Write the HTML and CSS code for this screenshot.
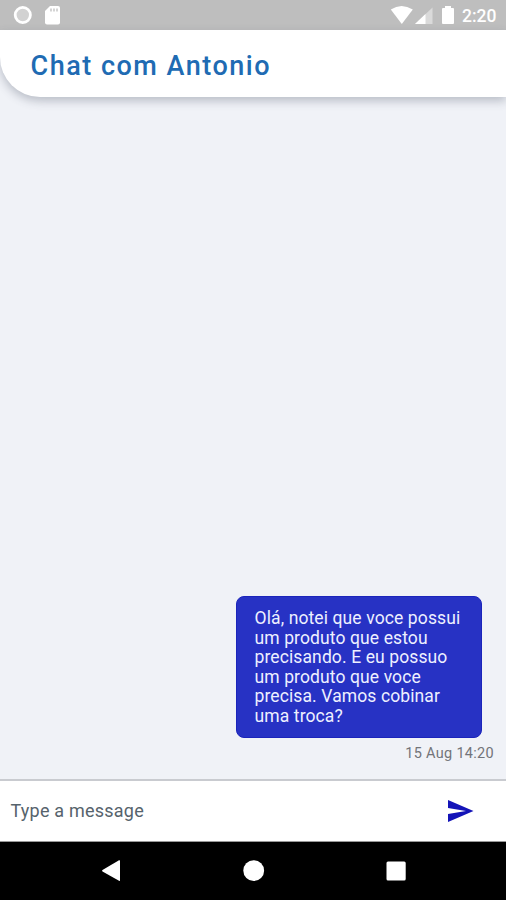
FILE: index.html
```html
<!DOCTYPE html>
<html lang="pt">
<head>
<meta charset="utf-8">
<title>Chat com Antonio</title>
<link rel="stylesheet" href="styles.css">
</head>
<body>
<div class="phone">
  <div class="status">
    <svg class="status-left" width="62" height="30" viewBox="0 0 62 30">
      <circle cx="22.800" cy="15" r="7.600" fill="#d2d2d2" stroke="#fff" stroke-width="2.800"/>
      <path fill="#fff" d="M50 6h8q2 0 2 2v14.500q0 2-2 2H47q-2 0-2-2V11z"/>
      <path stroke="#bdbdbd" stroke-width="1.300" d="M51 8.500v3M54 8.500v3M57 8.500v3"/>
    </svg>
    <svg class="status-right" width="66" height="30" viewBox="0 0 66 30">
      <path fill="#fff" d="M.8 9.600Q11.500 2.500 22.800 9.600L11.800 24z"/>
      <path fill="#dadada" d="M42.500 7.500V24H25z"/>
      <path fill="#fff" d="M35.500 14v10H25z"/>
      <path fill="#fff" d="M55 6h6v2h2q1 0 1 1v14q0 1-1 1H53q-1 0-1-1V9q0-1 1-1h2z"/>
    </svg>
    <span class="clock">2:20</span>
  </div>
  <header class="header"><h1>Chat com Antonio</h1></header>
  <main class="messages">
    <div class="bubble">Olá, notei que voce possui<br>um produto que estou<br>precisando. E eu possuo<br>um produto que voce<br>precisa. Vamos cobinar<br>uma troca?</div>
    <time class="date">15 Aug 14:20</time>
  </main>
  <div class="composer">
    <span class="placeholder">Type a message</span>
    <svg width="26" height="22" viewBox="0 0 26 22"><path fill="#1414b8" d="M0 0L25.500 11 0 22V14L18 11 0 8z"/></svg>
  </div>
  <nav class="nav">
    <svg width="506" height="58" viewBox="0 0 506 58" fill="#fff">
      <path d="M120 18.800v19.500q0 1-1 .5L102.500 29.500q-1-.8 0-1.600L119 18.300q1-.5 1 .5z"/>
      <circle cx="253.700" cy="28.700" r="10.400"/>
      <rect x="386.500" y="19.500" width="19.200" height="19" rx="1.500"/>
    </svg>
  </nav>
</div>
</body>
</html>
```
FILE: styles.css
```css
* { box-sizing: border-box; }
body { margin: 0; font-family: Roboto, sans-serif; }
.phone { width: 506px; height: 900px; display: flex; flex-direction: column; background: #f0f2f7; overflow: hidden; }
.status { height: 30px; flex: none; display: flex; align-items: center; background: #bebebe; padding-right: 9px; }
.status svg { display: block; }
.status-left { margin-right: auto; }
.status-right { margin-right: 6px; }
.clock { color: #fff; font-size: 17.5px; font-weight: 500; line-height: 30px; width: 35px; white-space: nowrap; padding-top: 2px; }
.header { height: 67px; flex: none; background: #fff; border-bottom-left-radius: 40px; box-shadow: 0 4px 10px rgba(60, 70, 90, .3); padding-left: 30.5px; }
h1 { margin: 0; font-size: 27px; line-height: 73px; font-weight: 500; letter-spacing: 1.5px; color: #206bb3; white-space: nowrap; }
.messages { flex: 1; display: flex; flex-direction: column; align-items: flex-end; justify-content: flex-end; padding: 0 12px 16px 0; }
.bubble { width: 246px; height: 142px; margin-right: 12px; padding: 12px 0 0 17.5px; border-radius: 8px; background: #2732c4; border: 1px solid #1b24bb; color: #eef0ff; font-size: 17.5px; line-height: 19.6px; letter-spacing: .11px; white-space: nowrap; }
.date { margin-top: 7px; height: 18px; font-size: 14.5px; line-height: 18px; letter-spacing: .3px; color: #737479; white-space: nowrap; }
.composer { height: 63px; flex: none; display: flex; align-items: center; justify-content: space-between; background: #fff; border-top: 2px solid #c9cbd0; border-bottom: 1px solid #999; padding: 0 32px 0 10.5px; }
.placeholder { font-size: 18px; letter-spacing: .22px; padding-bottom: 2px; color: #56636c; }
.nav { height: 58px; flex: none; background: #000; }
.nav svg { display: block; }
```
